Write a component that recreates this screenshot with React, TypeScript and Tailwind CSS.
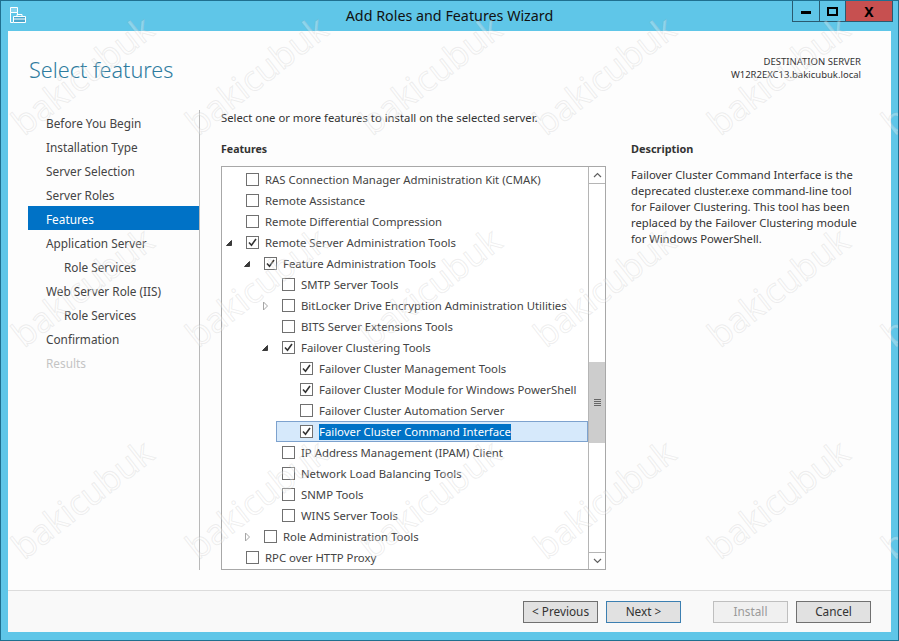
import React from 'react';

const FONT = "font-['Noto_Sans','Open_Sans',sans-serif]";

type Row = {
  label: string;
  level: 0 | 1 | 2 | 3;
  checked?: boolean;
  arrow?: 'open' | 'closed';
  selected?: boolean;
};

const rows: Row[] = [
  { label: 'RAS Connection Manager Administration Kit (CMAK)', level: 0 },
  { label: 'Remote Assistance', level: 0 },
  { label: 'Remote Differential Compression', level: 0 },
  { label: 'Remote Server Administration Tools', level: 0, checked: true, arrow: 'open' },
  { label: 'Feature Administration Tools', level: 1, checked: true, arrow: 'open' },
  { label: 'SMTP Server Tools', level: 2 },
  { label: 'BitLocker Drive Encryption Administration Utilities', level: 2, arrow: 'closed' },
  { label: 'BITS Server Extensions Tools', level: 2 },
  { label: 'Failover Clustering Tools', level: 2, checked: true, arrow: 'open' },
  { label: 'Failover Cluster Management Tools', level: 3, checked: true },
  { label: 'Failover Cluster Module for Windows PowerShell', level: 3, checked: true },
  { label: 'Failover Cluster Automation Server', level: 3 },
  { label: 'Failover Cluster Command Interface', level: 3, checked: true, selected: true },
  { label: 'IP Address Management (IPAM) Client', level: 2 },
  { label: 'Network Load Balancing Tools', level: 2 },
  { label: 'SNMP Tools', level: 2 },
  { label: 'WINS Server Tools', level: 2 },
  { label: 'Role Administration Tools', level: 1, arrow: 'closed' },
  { label: 'RPC over HTTP Proxy', level: 0 },
];

const indent = ['ml-0', 'ml-[18px]', 'ml-[36px]', 'ml-[54px]'];

const steps = [
  { label: 'Before You Begin' },
  { label: 'Installation Type' },
  { label: 'Server Selection' },
  { label: 'Server Roles' },
  { label: 'Features', active: true },
  { label: 'Application Server' },
  { label: 'Role Services', sub: true },
  { label: 'Web Server Role (IIS)' },
  { label: 'Role Services', sub: true },
  { label: 'Confirmation' },
  { label: 'Results', disabled: true },
];

function Arrow({ kind }: { kind?: 'open' | 'closed' }) {
  if (kind === 'open') {
    return (
      <svg width="8" height="8" viewBox="0 0 8 8" className="ml-[3px]">
        <path d="M6.5 1.5V6.5H1.5Z" fill="#3a3a3a" stroke="#3a3a3a" />
      </svg>
    );
  }
  if (kind === 'closed') {
    return (
      <svg width="7" height="10" viewBox="0 0 7 10" className="ml-[4px]">
        <path d="M1.5 1V9L5.5 5Z" fill="#fff" stroke="#a6a6a6" />
      </svg>
    );
  }
  return null;
}

function Checkbox({ checked }: { checked?: boolean }) {
  return (
    <span className="flex h-[13px] w-[13px] shrink-0 items-center justify-center border border-[#707070] bg-white">
      {checked && (
        <svg width="11" height="11" viewBox="0 0 11 11">
          <path d="M2 5.5L4.5 8.2L9 2" fill="none" stroke="#333" strokeWidth="1.6" />
        </svg>
      )}
    </span>
  );
}

function FeatureRow({ row }: { row: Row }) {
  return (
    <div
      className={`flex h-[21px] items-center ${indent[row.level]} ${
        row.selected ? 'border border-[#7da2ce] bg-[#d6e9fb]' : ''
      }`}
    >
      <span className={`flex h-full shrink-0 items-center ${row.selected ? 'w-[23px]' : 'w-[24px]'}`}>
        <Arrow kind={row.arrow} />
      </span>
      <Checkbox checked={row.checked} />
      <span
        className={`ml-[6px] text-[11.35px] whitespace-nowrap leading-[16px] ${
          row.selected ? 'bg-[#0072c6] text-white' : 'text-[#444]'
        }`}
      >
        {row.label}
      </span>
    </div>
  );
}

function Scrollbar() {
  return (
    <div className="flex w-[17px] shrink-0 flex-col border-l border-[#b5b5b5] bg-white">
      <div className="flex h-[17px] items-center justify-center border-b border-[#b5b5b5]">
        <svg width="9" height="6" viewBox="0 0 9 6">
          <path d="M1 5L4.5 1.5L8 5" fill="none" stroke="#606060" strokeWidth="1.2" />
        </svg>
      </div>
      <div className="flex-1">
        <div className="mt-[178px] flex h-[81px] items-center justify-center bg-[#cdcdcd]">
          <div className="flex h-[7px] w-[7px] flex-col justify-between">
            <div className="h-px bg-[#666]" />
            <div className="h-px bg-[#666]" />
            <div className="h-px bg-[#666]" />
            <div className="h-px bg-[#666]" />
          </div>
        </div>
      </div>
      <div className="flex h-[17px] items-center justify-center border-t border-[#b5b5b5]">
        <svg width="9" height="6" viewBox="0 0 9 6">
          <path d="M1 1L4.5 4.5L8 1" fill="none" stroke="#606060" strokeWidth="1.2" />
        </svg>
      </div>
    </div>
  );
}

function WizardButton({ label, variant }: { label: string; variant?: 'default' | 'disabled' }) {
  let cls = 'border-[#707070] bg-[#e1e1e1] text-[#333]';
  if (variant === 'default') cls = 'border-[#3c7fb1] bg-[#e1e1e1] text-[#333]';
  if (variant === 'disabled') cls = 'border-[#bfbfbf] bg-[#f0f0f0] text-[#9a9a9a]';
  return (
    <div className={`flex h-[22px] w-[75px] items-center justify-center border text-[11.8px] ${cls}`}>{label}</div>
  );
}

function AppIcon() {
  return (
    <svg width="17" height="17" viewBox="0 0 17 17" className="mt-[6px] ml-[9px]">
      <path d="M0.5 0.5H7.5V5.5H0.5Z" fill="#fff" fillOpacity="0.25" stroke="#fff" />
      <path d="M0.5 5.5V15.5H3M7.5 5.5V8" fill="none" stroke="#fff" />
      <path d="M3.5 9.5H15.5V15.5H3.5Z" fill="#4aa6cc" stroke="#fff" />
      <path d="M7 9V7.5H12V9" fill="none" stroke="#fff" />
      <path d="M3.5 12H15.5" stroke="#fff" />
    </svg>
  );
}

function Watermarks() {
  const cells = Array.from({ length: 18 });
  return (
    <div className="pointer-events-none absolute top-[-33px] left-[-6px] grid grid-cols-[repeat(6,174px)] grid-rows-[repeat(3,212px)]">
      {cells.map((_, i) => (
        <div key={i} className="flex items-center justify-center">
          <span className="rotate-[-38deg] font-['Open_Sans',sans-serif] text-[35px] leading-none text-[rgba(255,255,255,0.3)] [-webkit-text-stroke:1px_rgba(170,170,170,0.2)]">
            bakicubuk
          </span>
        </div>
      ))}
    </div>
  );
}

export default function App() {
  return (
    <div className={`relative flex h-[641px] w-[899px] flex-col overflow-hidden border border-[#1f6f8f] bg-[#5fc6e8] text-[12px] ${FONT}`}>
      {/* title bar */}
      <div className="grid h-[30px] shrink-0 grid-cols-[1fr_auto_1fr] items-start">
        <AppIcon />
        <div className="pt-[5px] text-[14.3px] leading-[20px] text-[#111]">Add Roles and Features Wizard</div>
        <div className="flex justify-end pr-[5px]">
          <div className="flex h-[21px] border-x border-b border-[#2a5a70]">
            <div className="flex w-[27px] items-center justify-center border-r border-[#2a5a70]">
              <div className="mt-[3px] h-[3px] w-[10px] bg-black" />
            </div>
            <div className="flex w-[26px] items-center justify-center border-r border-[#2a5a70]">
              <div className="h-[9px] w-[11px] border-2 border-black" />
            </div>
            <div className="flex w-[46px] items-center justify-center bg-[#c75050] text-[14px] font-bold text-black">
              X
            </div>
          </div>
        </div>
      </div>

      {/* client area */}
      <div className="mx-[7px] flex h-[601px] flex-col bg-[#fdfdfd]">
        <div className="flex h-[79px] shrink-0 justify-between">
          <div className="mt-[21px] ml-[21px] text-[21.6px] leading-[36px] font-light text-[#2f7c9f]">Select features</div>
          <div className="mt-[24px] mr-[30px] text-right text-[9.5px] leading-[13px] text-[#333]">
            <div>DESTINATION SERVER</div>
            <div>W12R2EXC13.bakicubuk.local</div>
          </div>
        </div>

        <div className="flex h-[460px] shrink-0">
          {/* steps */}
          <div className="ml-[20px] w-[172px] shrink-0 border-r border-[#b9b9b9] text-[11.8px]">
            {steps.map((s, i) => (
              <div
                key={i}
                className={`flex h-[24px] w-[171px] items-center pt-[4px] ${s.sub ? 'pl-[36px]' : 'pl-[18px]'} ${
                  s.active ? 'bg-[#0072c6] text-white' : s.disabled ? 'text-[#c4c4c4]' : 'text-[#444]'
                }`}
              >
                {s.label}
              </div>
            ))}
          </div>

          {/* features */}
          <div className="ml-[21px] flex w-[385px] shrink-0 flex-col">
            <div className="text-[11.3px] leading-[16px] text-[#333]">Select one or more features to install on the selected server.</div>
            <div className="mt-[15px] text-[10.6px] leading-[16px] font-bold text-[#333]">Features</div>
            <div className="mt-[9px] flex h-[404px] border border-[#a8a8a8] bg-white">
              <div className="flex-1 overflow-hidden pt-[2px]">
                {rows.map((r) => (
                  <FeatureRow key={r.label} row={r} />
                ))}
              </div>
              <Scrollbar />
            </div>
          </div>

          {/* description */}
          <div className="ml-[25px] w-[230px]">
            <div className="mt-[31px] text-[10.9px] leading-[16px] font-bold text-[#333]">Description</div>
            <p className="mt-[10px] text-[11.25px] leading-[16px] text-[#333]">
              Failover Cluster Command Interface is the
              <br />
              deprecated cluster.exe command-line tool
              <br />
              for Failover Clustering. This tool has been
              <br />
              replaced by the Failover Clustering module
              <br />
              for Windows PowerShell.
            </p>
          </div>
        </div>

        {/* footer */}
        <div className="mt-[20px] flex flex-1 items-center justify-end border-t border-[#dcdcdc] bg-[#f9f9f9] pr-[20px]">
          <WizardButton label="< Previous" />
          <div className="ml-[8px]">
            <WizardButton label="Next >" variant="default" />
          </div>
          <div className="ml-[32px]">
            <WizardButton label="Install" variant="disabled" />
          </div>
          <div className="ml-[8px]">
            <WizardButton label="Cancel" />
          </div>
        </div>
      </div>

      <Watermarks />
    </div>
  );
}
